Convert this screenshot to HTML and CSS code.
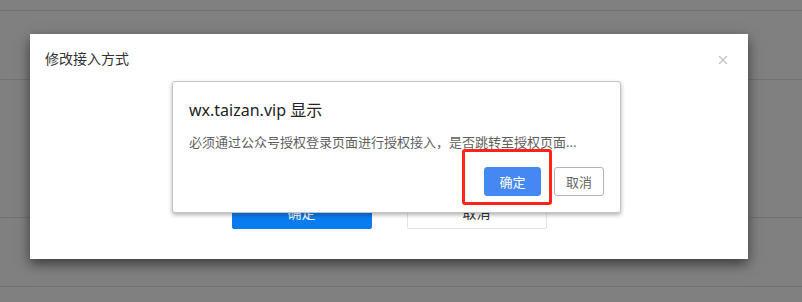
FILE: index.html
```html
<!DOCTYPE html>
<html lang="zh-CN">
<head>
    <meta charset="UTF-8">
    <meta name="viewport" content="width=device-width, initial-scale=1.0">
    <title>修改接入方式</title>
    <link rel="stylesheet" href="styles.css">
</head>
<body>
    <div class="page">
        <div class="row row-top"></div>
        <div class="row"></div>
        <div class="row row-tall"></div>
        <div class="row"></div>
    </div>

    <div class="modal">
        <div class="modal-header">
            <span class="modal-title">修改接入方式</span>
            <svg class="close" width="10" height="10" viewBox="0 0 10 10">
                <path d="M1 1L9 9M9 1L1 9" stroke="#c4c4c4" stroke-width="1.4" fill="none"/>
            </svg>
        </div>
        <div class="modal-footer">
            <button class="btn btn-primary">确定</button>
            <button class="btn btn-default">取消</button>
        </div>
    </div>

    <div class="alert">
        <div class="alert-title">wx.taizan.vip 显示</div>
        <div class="alert-msg">必须通过公众号授权登录页面进行授权接入，是否跳转至授权页面...</div>
        <div class="alert-actions">
            <button class="abtn abtn-ok">确定</button>
            <button class="abtn abtn-cancel">取消</button>
        </div>
    </div>

    <div class="highlight"></div>
</body>
</html>
```

FILE: styles.css
```css
body {
    margin: 0;
    width: 802px;
    height: 302px;
    overflow: hidden;
    background: #808080;
    font-family: "Noto Sans", "Noto Sans CJK SC", sans-serif;
    position: relative;
}
.page {
    display: flex;
    flex-direction: column;
}
.row {
    height: 68px;
    border-bottom: 1px solid #727272;
}
.row-top {
    height: 10px;
}
.row-tall {
    height: 137px;
}
.modal {
    position: absolute;
    left: 30px;
    top: 34px;
    width: 718px;
    height: 225px;
    background: #fff;
    box-shadow: 0 5px 12px rgba(0,0,0,0.55);
    display: flex;
    flex-direction: column;
}
.modal-header {
    display: flex;
    justify-content: space-between;
    align-items: center;
    padding: 15px 20px 0 15px;
}
.modal-title {
    font-size: 14px;
    line-height: 20px;
    color: #333;
}
.close {
    margin-top: 1px;
}
.modal-footer {
    margin-top: auto;
    padding-bottom: 30px;
    display: flex;
    justify-content: center;
    gap: 35px;
}
.btn {
    width: 140px;
    height: 34px;
    border-radius: 2px;
    font-family: inherit;
    font-size: 14px;
    padding: 0;
}
.btn-primary {
    background: #0a7cf0;
    border: 1px solid #0a7cf0;
    color: #fff;
}
.btn-default {
    background: #fff;
    border: 1px solid #e4e4e4;
    color: #333;
}
.alert {
    position: absolute;
    left: 172px;
    top: 81px;
    width: 415px;
    height: 96px;
    padding: 18px 16px 16px 16px;
    background: #fff;
    border: 1px solid #c4c4c4;
    border-radius: 3px;
    box-shadow: 0 2px 4px rgba(0,0,0,0.3);
    display: flex;
    flex-direction: column;
}
.alert-title {
    font-size: 16px;
    line-height: 20px;
    color: #222;
}
.alert-msg {
    margin-top: 13px;
    font-size: 13px;
    line-height: 18px;
    color: #5f5f5f;
}
.alert-actions {
    margin-top: auto;
    display: flex;
    justify-content: flex-end;
    gap: 13px;
}
.abtn {
    height: 29px;
    border-radius: 3px;
    font-family: inherit;
    font-size: 13px;
    padding: 0;
}
.abtn-ok {
    width: 57px;
    background: #4688f3;
    border: 1px solid #4688f3;
    color: #fff;
}
.abtn-cancel {
    width: 50px;
    background: #fff;
    border: 1px solid #b4b4b4;
    color: #666;
}
.highlight {
    position: absolute;
    left: 462px;
    top: 149px;
    width: 84px;
    height: 50px;
    border: 3px solid #ff2418;
    border-radius: 3px;
}
```
